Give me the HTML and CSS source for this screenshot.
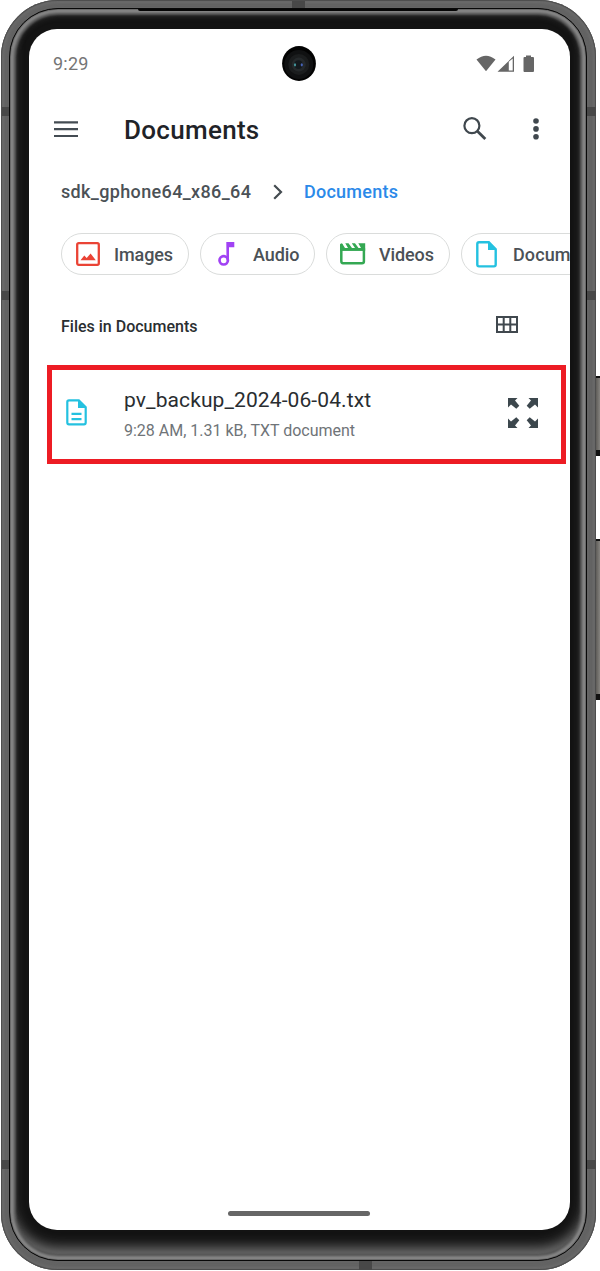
FILE: index.html
```html
<!DOCTYPE html>
<html lang="en">
<head>
<meta charset="utf-8">
<title>Documents</title>
<link rel="stylesheet" href="styles.css">
</head>
<body>
<div class="phone">
  <i class="key power"></i><i class="key volume"></i>
  <div class="frame">
    <i class="band tl"></i><i class="band tl2"></i><i class="band bl"></i>
    <i class="band tr"></i><i class="band tr2"></i><i class="band br"></i>
    <i class="band top"></i><i class="band bottom"></i>
    <div class="glass">
      <i class="speaker"></i>
      <main class="screen">
        <div class="status">
          <span class="time">9:29</span>
          <svg class="status-icons" width="60" height="18" viewBox="0 0 60 18" fill="#666">
            <path d="M.5 4.6Q10 -3 19.5 4.6L10 16.300Z"/>
            <path d="M21.500 16.800L38 .8V16.800ZM32.800 6.800V15.500H36.700V3.600Z" fill-rule="evenodd"/>
            <path d="M50 .5H55V2H57Q58 2 58 3V16Q58 17 57 17H48.500Q47.500 17 47.500 16V3Q47.500 2 48.500 2H50Z"/>
          </svg>
        </div>
        <header class="bar">
          <svg class="menu" width="24" height="17" viewBox="0 0 24 17" fill="#444c53"><path d="M0 .3H24V2.500H0ZM0 7.100H24V9.300H0ZM0 13.900H24V16.100H0Z"/></svg>
          <h1>Documents</h1>
          <svg class="search" width="24" height="24" viewBox="0 0 24 24" fill="none" stroke="#40484e" stroke-width="2.200"><circle cx="8.900" cy="8.700" r="7.500"/><path d="M14.200 14L22.300 22.100" stroke-width="2.800"/></svg>
          <svg class="more" width="6" height="22" viewBox="0 0 6 22" fill="#40484e"><circle cx="3" cy="3" r="2.800"/><circle cx="3" cy="10.900" r="2.800"/><circle cx="3" cy="18.800" r="2.800"/></svg>
        </header>
        <nav class="crumbs">
          <span class="device">sdk_gphone64_x86_64</span>
          <svg width="10" height="16" viewBox="0 0 10 16" fill="none" stroke="#444b50" stroke-width="2.200"><path d="M1.200 1.200L8 8L1.200 14.800"/></svg>
          <span class="current">Documents</span>
        </nav>
        <div class="chips">
          <div class="chip images"><svg width="24" height="24" viewBox="0 0 24 24"><rect x="1.200" y="1.200" width="21.600" height="21.600" rx="1.500" fill="none" stroke="#ea4335" stroke-width="2.300"/><path d="M4.500 18.300L8.300 13.500L10.700 16L14.600 11.500L19.800 18.300Z" fill="#ea4335"/></svg><span>Images</span></div>
          <div class="chip audio"><svg width="17" height="24" viewBox="0 0 17 24"><circle cx="5.700" cy="18.300" r="4.200" fill="none" stroke="#a142f4" stroke-width="2.700"/><path d="M8.300 0H16.300V5.300H11V18.300H8.500Z" fill="#a142f4"/></svg><span>Audio</span></div>
          <div class="chip videos"><svg width="27" height="22" viewBox="0 0 27 22"><path d="M2.300 1.300V17.700Q2.300 20.200 4 20.200H23Q24.900 20.200 24.900 18.500V6.500H2.300" fill="none" stroke="#34a853" stroke-width="2.500"/><path d="M1 2Q1 .5 3 .3L6 5H9L6.300 .3H9.500L13 5H16L12.800 .3H16L19.500 5H22L19.300 .3H26.200V7.800H1Z" fill="#34a853"/></svg><span>Videos</span></div>
          <div class="chip docs"><svg width="21" height="27" viewBox="0 0 21 27"><path d="M3 1.300H12.800L19.700 8.200V23.600Q19.700 25.400 18 25.400H3Q1.300 25.400 1.300 23.600V3Q1.300 1.300 3 1.300Z" fill="none" stroke="#24c1e0" stroke-width="2.400"/><path d="M12 1V9H20Z" fill="#24c1e0"/></svg><span>Documents</span></div>
        </div>
        <div class="section">
          <h2>Files in Documents</h2>
          <svg width="22" height="17" viewBox="0 0 22 17" fill="none" stroke="#40484e" stroke-width="2"><path d="M1 1H21V16H1ZM7.700 1V16M14.300 1V16M1 8.500H21"/></svg>
        </div>
        <article class="file">
          <svg class="doc" width="21" height="27" viewBox="0 0 21 27"><path d="M3 1.300H12.800L19.700 8.200V23.600Q19.700 25.400 18 25.400H3Q1.300 25.400 1.300 23.600V3Q1.300 1.300 3 1.300Z" fill="none" stroke="#24c1e0" stroke-width="2.200"/><path d="M12 1V9H20Z" fill="#24c1e0"/><path d="M5.500 14.800H15.500M5.500 20.200H15.500" stroke="#24c1e0" stroke-width="2.200"/></svg>
          <div class="info">
            <div class="name">pv_backup_2024-06-04.txt</div>
            <div class="meta">9:28 AM, 1.31 kB, TXT document</div>
          </div>
          <svg class="expand" width="30" height="30" viewBox="0 0 30 30" fill="#3c474d"><path id="arrow" d="M0 0H9.500L7 2.500L11.300 7.700L8.300 10.700L3 6.500L0 9.500Z"/><use href="#arrow" transform="matrix(-1 0 0 1 30 0)"/><use href="#arrow" transform="matrix(1 0 0 -1 0 30)"/><use href="#arrow" transform="rotate(180 15 15)"/></svg>
        </article>
        <div class="home"></div>
      </main>
    </div>
  </div>
  <svg class="camera" width="34" height="35" viewBox="0 0 34 35"><ellipse cx="17" cy="17.500" rx="16.900" ry="17.400" fill="#020202"/><circle cx="16.800" cy="18.400" r="14.500" fill="#101112"/><circle cx="16.800" cy="18.400" r="10.500" fill="#1b1d1e"/><circle cx="16.800" cy="18.600" r="7" fill="#25292b"/><circle cx="16.500" cy="18.600" r="4.300" fill="#14191d"/><ellipse cx="13" cy="18.800" rx="1.100" ry="1.600" fill="#43969b"/><ellipse cx="19.800" cy="18.800" rx="1.100" ry="1.600" fill="#4864b8"/></svg>
</div>
</body>
</html>
```
FILE: styles.css
```css
* { box-sizing: border-box; }
body { margin: 0; background: #fff; font-family: Roboto, sans-serif; }
svg { display: block; flex: none; }
.phone { position: relative; width: 600px; height: 1271px; overflow: hidden; padding: 0 4px 1px 1px; }
.frame {
  position: relative; height: 1270px; padding: 8px 9px 9px 8px; overflow: hidden;
  border-radius: 57px; background: #666;
  box-shadow: inset 0 0 1px 1px #4b4b4b, inset 0 0 4px 2px #747474, inset 0 0 8px 5px #5f5f5f;
}
.glass {
  position: relative; height: 1253px; padding: 20px 16px 30px 19px;
  border: 1px solid #080808; border-radius: 49px; background: #131313;
  box-shadow: inset 0 0 1px 1px #666, inset 0 0 3px 4px #8a8a8a, inset 0 0 2px 6px #4a4a4a, inset 0 3px 7px 2px #484848, inset 0 -12px 13px 0 #777;
}
.screen {
  height: 1201px; border-radius: 28px; background: #fff; overflow: hidden;
  display: flex; flex-direction: column;
}
.band { position: absolute; background: #484848; width: 8px; height: 9px; }
.tl, .tl2, .bl { left: 1px; }
.tr, .tr2, .br { right: 0; width: 9px; }
.tl, .tr { top: 107px; }
.tl2, .tr2 { top: 291px; }
.bl, .br { top: 1160px; }
.band.top { left: 291px; top: 1px; width: 13px; height: 7px; }
.band.bottom { left: 358px; bottom: 0; width: 13px; }
.speaker { position: absolute; left: 128px; top: 0; width: 320px; height: 2px; background: #050505; border-radius: 0 0 4px 4px; }
.key { position: absolute; right: 0; width: 5px; background: linear-gradient(90deg, #55534f, #85837f); border: solid #111; border-width: 2px 0 6px; }
.power { top: 376px; height: 80px; }
.volume { top: 539px; height: 161px; }
.camera { position: absolute; left: 282px; top: 46px; }
.status { display: flex; align-items: center; justify-content: space-between; height: 68px; padding: 0 34px 0 24px; }
.time { font-size: 18px; line-height: 22px; letter-spacing: .2px; color: #757575; padding-top: 2px; }
.status-icons { margin-top: 1px; }
.bar { display: flex; align-items: center; height: 64px; padding: 0 31px 0 25px; }
h1 { margin: 1px auto 0 46px; font-size: 26px; line-height: 32px; font-weight: 500; color: #1f2328; letter-spacing: .3px; }
.search { margin: -1px 46px 0 0; }
.more { margin-top: 0; }
.crumbs { display: flex; align-items: center; height: 62px; padding: 0 0 1px 32px; font-size: 18px; font-weight: 500; color: #4b5156; }
.device { letter-spacing: .35px; width: 190px; }
.crumbs svg { margin: 0 21px 0 22px; }
.current { color: #2b89e9; letter-spacing: .25px; }
.chips { display: flex; gap: 11px; padding: 10px 0 0 32px; height: 53px; }
.chip { display: flex; align-items: center; flex: none; height: 42px; border: 1px solid #dadcdb; border-radius: 21px; font-size: 18px; font-weight: 500; color: #4b5156; padding-left: 14px; letter-spacing: -.1px; }
.images { width: 128px; }
.images svg { margin-right: 14px; }
.audio { width: 115px; padding-left: 17px; }
.audio svg { margin-right: 18px; }
.videos { width: 124px; padding-left: 12px; }
.videos svg { margin-right: 13px; }
.docs { width: 160px; }
.docs svg { margin-right: 16px; }
.docs span { letter-spacing: .1px; }
.section { display: flex; align-items: center; justify-content: space-between; height: 100px; padding: 0 52px 2px 32px; margin-bottom: -11px; }
h2 { margin: 3px 0 0; font-size: 16px; line-height: 20px; font-weight: 500; color: #2a2e31; }
.section svg { margin-top: -1px; }
.file { display: flex; align-items: center; flex: none; width: 519px; height: 99px; margin-left: 18px; border: 5px solid #ed1c24; padding: 0 23px 0 14px; }
.doc { margin-top: -4px; }
.info { flex: 1; padding-left: 37px; }
.name { font-size: 21px; line-height: 28px; letter-spacing: .1px; color: #292d30; }
.meta { margin-top: 4px; font-size: 16px; line-height: 26px; color: #6f7478; }
.expand { margin-top: -4px; }
.home { width: 142px; height: 5px; border-radius: 3px; background: #666; margin: auto auto 14px 199px; }
```
